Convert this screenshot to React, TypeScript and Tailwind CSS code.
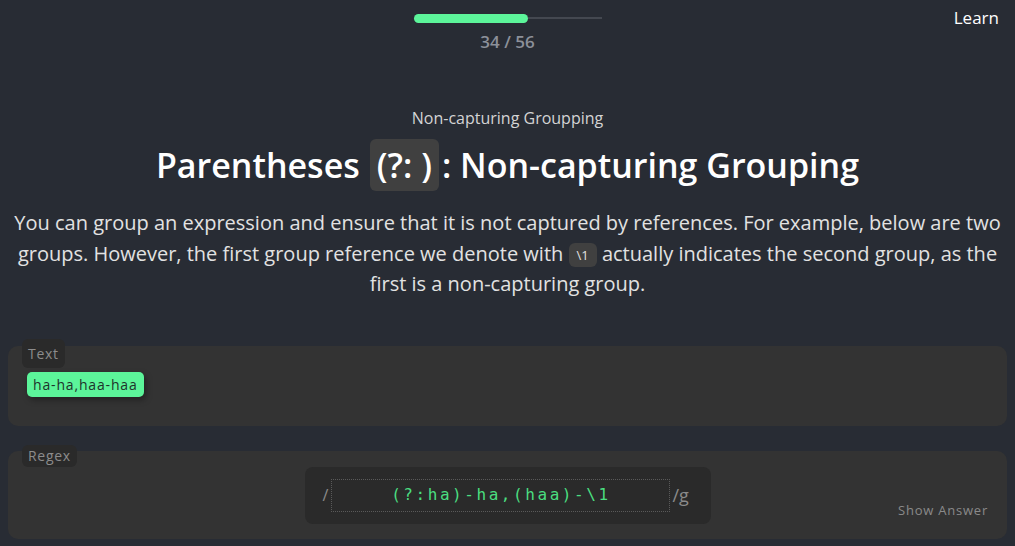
import React from "react";

const sans = "font-['Open_Sans',sans-serif]";
const mono = "font-['DejaVu_Sans_Mono',monospace]";

function Panel({
  label,
  labelClassName,
  children,
  className,
}: {
  label: string;
  labelClassName: string;
  children: React.ReactNode;
  className?: string;
}) {
  return (
    <div className={`relative rounded-[10px] bg-[#333333] ${className ?? ""}`}>
      <span
        className={`absolute left-[14px] rounded-[6px] bg-[#2a2a2a] px-[6px] text-[14px] tracking-[0.05em] text-[#8c8c8c] ${labelClassName}`}
      >
        {label}
      </span>
      {children}
    </div>
  );
}

export default function App() {
  const done = 34;
  const total = 56;

  return (
    <div className={`min-h-[546px] bg-[#282c34] ${sans} text-white`}>
      <header className="relative flex flex-col items-center pt-[13px]">
        <div className="flex h-[10px] w-[188px] items-center">
          <div
            className="h-[9px] rounded-full bg-[#5cf59a]"
            style={{ width: `${(done / total) * 100}%` }}
          />
          <div className="h-[2px] flex-1 bg-[#444850]" />
        </div>
        <p className="mt-[8px] text-[17px] font-semibold leading-[22px] text-[#8c9099]">
          {done} / {total}
        </p>
        <a className="absolute right-[16px] top-[7px] text-[17px] leading-[22px] text-white">
          Learn
        </a>
      </header>

      <section className="mt-[54px] flex flex-col items-center px-[12px] text-center">
        <p className="text-[16px] leading-[22px] text-[#d4d4d4]">Non-capturing Groupping</p>
        <h1 className="mt-[10px] flex items-center text-[34px] font-semibold leading-[52px] text-white">
          Parentheses
          <code className={`ml-[10px] mr-[3px] rounded-[6px] bg-[#404040] px-[7px] text-[34px] leading-[52px] ${sans}`}>
            (?: )
          </code>
          : Non-capturing Grouping
        </h1>
        <p className="mt-[17px] text-[20px] leading-[30.5px] text-[#e2e2e2]">
          You can group an expression and ensure that it is not captured by references. For
          example, below are two groups. However, the first group reference we denote with{" "}
          <code
            className={`inline-block rounded-[6px] bg-[#404040] px-[8px] align-[1px] text-[13px] leading-[24px] ${sans}`}
          >
            \1
          </code>{" "}
          actually indicates the second group, as the first is a non-capturing group.
        </p>
      </section>

      <div className="mt-[46px] flex flex-col gap-[25px] px-[8px]">
        <Panel
          label="Text"
          labelClassName="top-[-7px] leading-[29px]"
          className="h-[80px] px-[19px] pt-[26px]"
        >
          <span className="inline-block rounded-[5px] bg-[#5cf59a] px-[6px] text-[14px] leading-[25px] tracking-[0.06em] text-[#1e332b] shadow-[2px_3px_6px_rgba(0,0,0,0.35)]">
            ha-ha,haa-haa
          </span>
        </Panel>

        <Panel
          label="Regex"
          labelClassName="top-[-6px] leading-[22px]"
          className="flex h-[88px] items-start justify-center pt-[16px]"
        >
          <div className="flex h-[57px] w-[406px] items-center rounded-[8px] bg-[#2a2a2a] px-[18px] text-[#8a8a8a]">
            <span className="text-[16px]">/</span>
            <div
              className={`ml-[3px] flex h-[33px] w-[339px] items-center justify-center border border-dotted border-[#5a5a5a] text-[16px] tracking-[0.16em] text-[#4ade80] ${mono}`}
            >
              (?:ha)-ha,(haa)-\1
            </div>
            <span className="ml-[2px] text-[18px]">/g</span>
          </div>
          <button className="absolute bottom-[18px] right-[19px] text-[13px] tracking-[0.06em] text-[#8a8a8a]">
            Show Answer
          </button>
        </Panel>
      </div>
    </div>
  );
}
